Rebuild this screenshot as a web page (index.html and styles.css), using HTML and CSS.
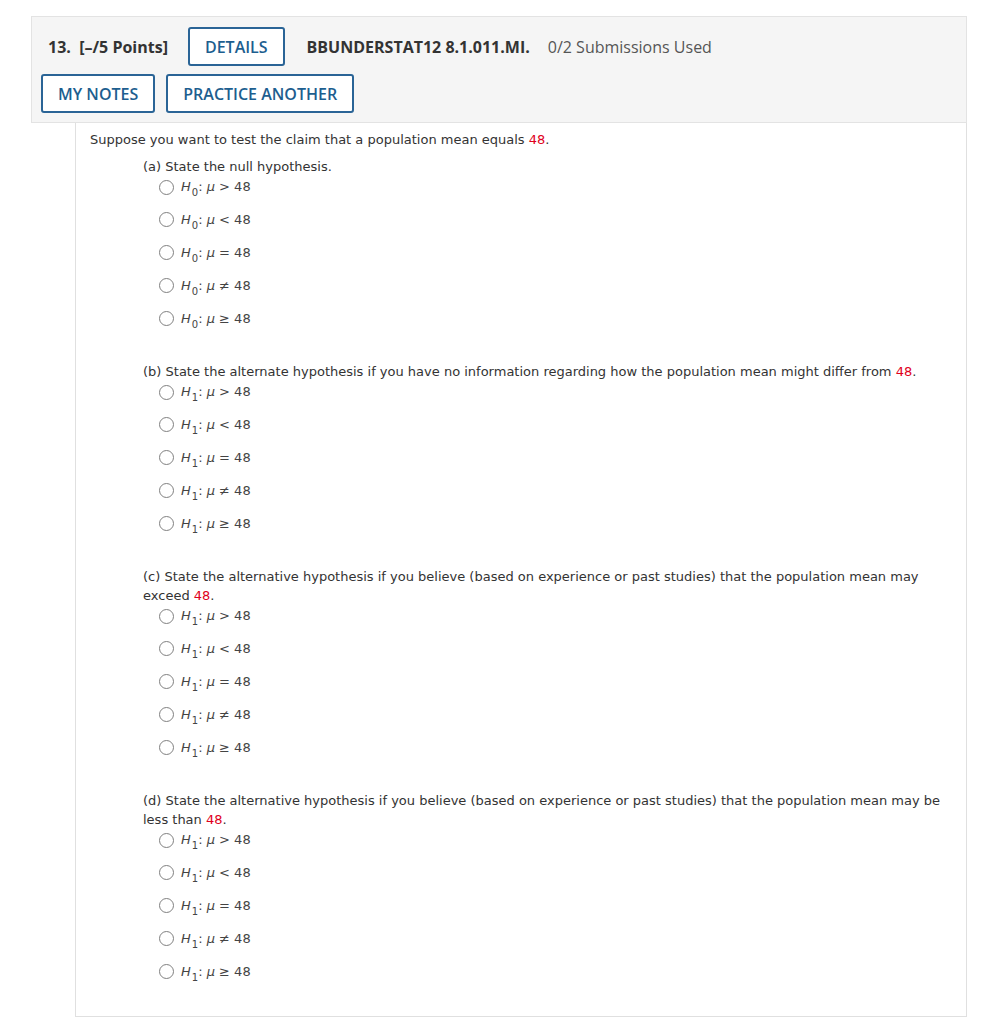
FILE: index.html
```html
<!DOCTYPE html>
<html lang="en">
<head>
  <meta charset="UTF-8">
  <title>Question 13</title>
  <link rel="stylesheet" href="styles.css">
</head>
<body>
  <div class="question">
    <div class="qhead">
      <div class="row">
        <span class="qnum">13.&nbsp; [–/5 Points]</span>
        <button class="btn btn-details">DETAILS</button>
        <span class="qid">BBUNDERSTAT12 8.1.011.MI.</span>
        <span class="subs">0/2 Submissions Used</span>
      </div>
      <div class="row row-btns">
        <button class="btn">MY NOTES</button>
        <button class="btn">PRACTICE ANOTHER</button>
      </div>
    </div>

    <div class="qbody">
      <p class="intro">Suppose you want to test the claim that a population mean equals <span class="red">48</span>.</p>

      <div class="part">
        <p class="prompt">(a) State the null hypothesis.</p>
        <ul class="opts">
          <li><span class="radio"></span><span class="lbl"><i>H</i><sub>0</sub>: <i>μ</i> &gt; 48</span></li>
          <li><span class="radio"></span><span class="lbl"><i>H</i><sub>0</sub>: <i>μ</i> &lt; 48</span></li>
          <li><span class="radio"></span><span class="lbl"><i>H</i><sub>0</sub>: <i>μ</i> = 48</span></li>
          <li><span class="radio"></span><span class="lbl"><i>H</i><sub>0</sub>: <i>μ</i> ≠ 48</span></li>
          <li><span class="radio"></span><span class="lbl"><i>H</i><sub>0</sub>: <i>μ</i> ≥ 48</span></li>
        </ul>
      </div>

      <div class="part">
        <p class="prompt">(b) State the alternate hypothesis if you have no information regarding how the population mean might differ from <span class="red">48</span>.</p>
        <ul class="opts">
          <li><span class="radio"></span><span class="lbl"><i>H</i><sub>1</sub>: <i>μ</i> &gt; 48</span></li>
          <li><span class="radio"></span><span class="lbl"><i>H</i><sub>1</sub>: <i>μ</i> &lt; 48</span></li>
          <li><span class="radio"></span><span class="lbl"><i>H</i><sub>1</sub>: <i>μ</i> = 48</span></li>
          <li><span class="radio"></span><span class="lbl"><i>H</i><sub>1</sub>: <i>μ</i> ≠ 48</span></li>
          <li><span class="radio"></span><span class="lbl"><i>H</i><sub>1</sub>: <i>μ</i> ≥ 48</span></li>
        </ul>
      </div>

      <div class="part">
        <p class="prompt">(c) State the alternative hypothesis if you believe (based on experience or past studies) that the population mean may exceed <span class="red">48</span>.</p>
        <ul class="opts">
          <li><span class="radio"></span><span class="lbl"><i>H</i><sub>1</sub>: <i>μ</i> &gt; 48</span></li>
          <li><span class="radio"></span><span class="lbl"><i>H</i><sub>1</sub>: <i>μ</i> &lt; 48</span></li>
          <li><span class="radio"></span><span class="lbl"><i>H</i><sub>1</sub>: <i>μ</i> = 48</span></li>
          <li><span class="radio"></span><span class="lbl"><i>H</i><sub>1</sub>: <i>μ</i> ≠ 48</span></li>
          <li><span class="radio"></span><span class="lbl"><i>H</i><sub>1</sub>: <i>μ</i> ≥ 48</span></li>
        </ul>
      </div>

      <div class="part">
        <p class="prompt">(d) State the alternative hypothesis if you believe (based on experience or past studies) that the population mean may be less than <span class="red">48</span>.</p>
        <ul class="opts">
          <li><span class="radio"></span><span class="lbl"><i>H</i><sub>1</sub>: <i>μ</i> &gt; 48</span></li>
          <li><span class="radio"></span><span class="lbl"><i>H</i><sub>1</sub>: <i>μ</i> &lt; 48</span></li>
          <li><span class="radio"></span><span class="lbl"><i>H</i><sub>1</sub>: <i>μ</i> = 48</span></li>
          <li><span class="radio"></span><span class="lbl"><i>H</i><sub>1</sub>: <i>μ</i> ≠ 48</span></li>
          <li><span class="radio"></span><span class="lbl"><i>H</i><sub>1</sub>: <i>μ</i> ≥ 48</span></li>
        </ul>
      </div>
    </div>
  </div>
</body>
</html>
```

FILE: styles.css
```css
body {
  margin: 0;
  padding: 16px 17px 0 31px;
  background: #fff;
  font-family: "Open Sans", sans-serif;
}
.question {
  width: 936px;
}
.qhead {
  background: #f5f5f5;
  border: 1px solid #e3e3e3;
  padding: 10px 0 9px 9px;
}
.row {
  display: flex;
  align-items: center;
}
.row-btns {
  margin-top: 8px;
  gap: 11px;
}
.qnum {
  font-weight: bold;
  font-size: 16px;
  color: #333;
  margin-left: 7px;
  margin-right: 20px;
}
.qid {
  font-weight: bold;
  font-size: 16px;
  color: #333;
  margin-left: 22px;
  margin-right: 18px;
}
.subs {
  font-size: 16px;
  color: #555;
}
.btn {
  font-family: "Open Sans", sans-serif;
  font-size: 16px;
  font-weight: 600;
  color: #1d5e8f;
  background: #fff;
  border: 2px solid #2a6496;
  border-radius: 3px;
  padding: 0 15px;
  height: 39px;
}
.qbody {
  margin-left: 44px;
  border: 1px solid #e0e0e0;
  border-top: none;
  padding: 7px 0 28px 14px;
  font-family: "DejaVu Sans", Verdana, sans-serif;
  font-size: 13px;
  color: #333;
}
.intro {
  margin: 0 0 7px;
  line-height: 20px;
}
.red {
  color: #e0001b;
}
.part {
  padding-left: 53px;
  margin-bottom: 27px;
}
.part:last-child {
  margin-bottom: 0;
}
.prompt {
  margin: 0;
  line-height: 19px;
}
.opts {
  list-style: none;
  margin: 0;
  padding: 0 0 0 16px;
}
.opts li {
  display: flex;
  align-items: center;
  height: 33px;
}
.opts li:first-child {
  height: 22px;
  margin-bottom: 5px;
}
.radio {
  width: 13px;
  height: 13px;
  border: 1.5px solid #808080;
  border-radius: 50%;
  margin-right: 7px;
  flex-shrink: 0;
}
.lbl {
  line-height: 16px;
  white-space: nowrap;
  color: #444;
}
.lbl sub {
  font-size: 10px;
  vertical-align: -5px;
  line-height: 0;
  margin-left: 1px;
}
.lbl i + i {
  margin-left: 3px;
  margin-right: 1px;
}
```
